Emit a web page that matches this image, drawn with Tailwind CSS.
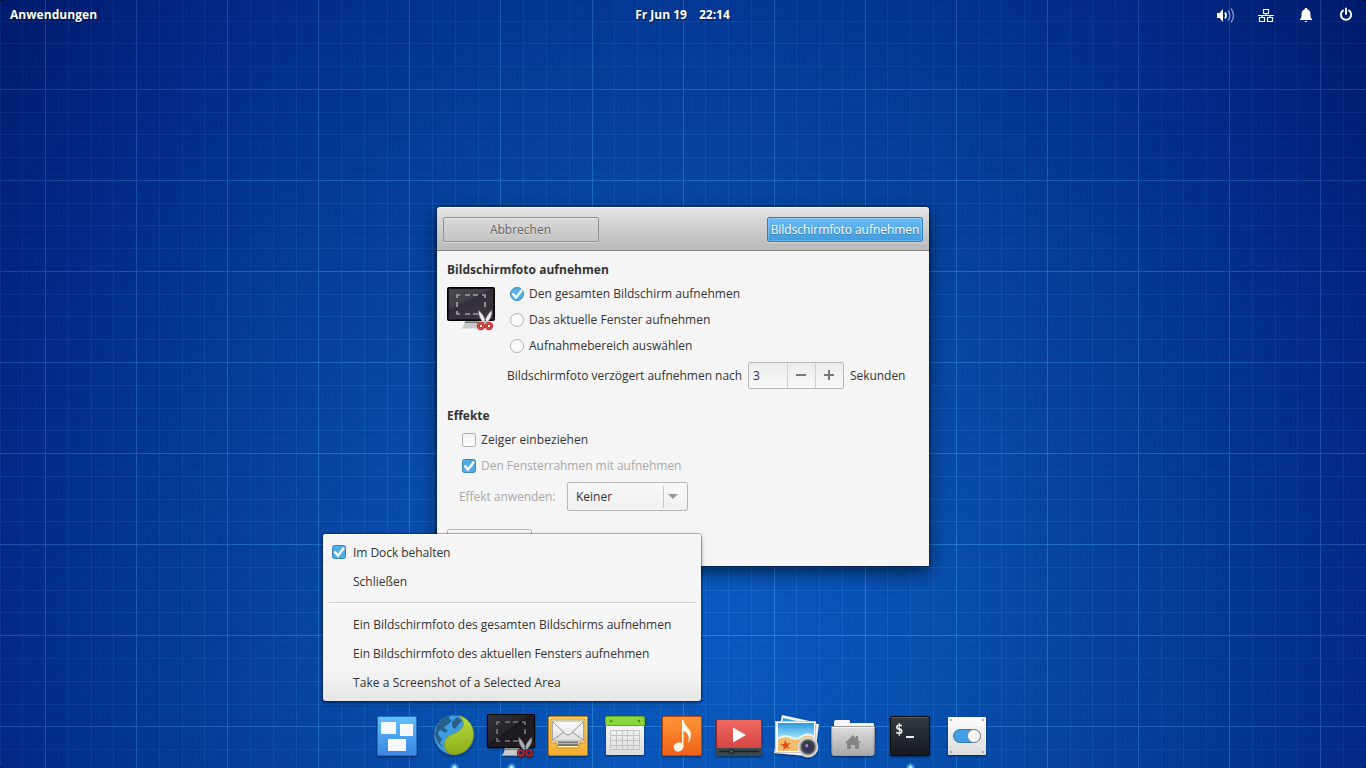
<!DOCTYPE html>
<html lang="de">
<head>
<meta charset="utf-8">
<title>Bildschirmfoto</title>
<script src="https://cdn.jsdelivr.net/npm/@tailwindcss/browser@4"></script>
</head>
<body class="relative h-[768px] w-[1366px] overflow-hidden bg-black text-[12px] leading-[18px] text-[#333] font-['Open_Sans','Noto_Sans',sans-serif]">

<!-- wallpaper -->
<svg class="absolute inset-0" width="1366" height="768" viewBox="0 0 1366 768">
  <defs>
    <radialGradient id="wall" gradientUnits="userSpaceOnUse" cx="0" cy="0" r="1" gradientTransform="translate(683 620) scale(890 1030)">
      <stop offset="0" stop-color="#0959c0"/><stop offset=".3" stop-color="#074dab"/><stop offset=".54" stop-color="#043c98"/><stop offset=".8" stop-color="#002782"/><stop offset="1" stop-color="#001768"/>
    </radialGradient>
    <radialGradient id="light" gradientUnits="userSpaceOnUse" cx="0" cy="0" r="1" gradientTransform="translate(683 560) scale(800 720)">
      <stop offset="0" stop-color="#4fb4ff" stop-opacity=".55"/><stop offset="1" stop-color="#4aa8f0" stop-opacity=".3"/>
    </radialGradient>
    <mask id="grid" maskUnits="userSpaceOnUse" x="0" y="0" width="1366" height="768"><path id="fine" stroke="#fff" stroke-opacity=".055"/><path id="minor" stroke="#fff" stroke-opacity=".33"/><path id="major" stroke="#fff" stroke-opacity=".85"/></mask>
  </defs>
  <rect width="1366" height="768" rx="3" fill="url(#wall)"/>
  <rect width="1366" height="768" fill="url(#light)" mask="url(#grid)"/>
</svg>
<script>
  // Blueprint grid: every 4th line is major, each cell is split into five fine steps.
  const cell = 1366 / 60, d = { fine: '', minor: '', major: '' };
  const add = (i, start, draw) => {
    const kind = i % 20 === 0 ? 'major' : i % 5 === 0 ? 'minor' : 'fine';
    d[kind] += draw(Math.floor(start + i * cell / 5) + 0.5);
  };
  for (let i = -10; i < 292; i++) add(i, 45.6, x => `M${x} 0V768`);
  for (let i = -20; i < 172; i++) add(i, 89.3, y => `M0 ${y}H1366`);
  for (const k in d) document.getElementById(k).setAttribute('d', d[k]);
</script>

<!-- panel -->
<header class="relative grid h-[30px] grid-cols-3 items-center pl-[10px] pr-[12px] font-bold text-white [text-shadow:0_1px_2px_rgba(0,0,0,.6)]">
  <span class="tracking-[0.06px]">Anwendungen</span>
  <div class="flex justify-center gap-3 pl-px"><span>Fr Jun 19</span><span>22:14</span></div>
  <div class="flex items-center justify-end gap-[24px]">
    <svg class="-mr-[2px]" width="20" height="16" viewBox="0 0 20 16" fill="none"><path d="M1 6h2.500l3.500-4v13l-3.500-4H1z" fill="#fff"/><path d="M9 5.500q2 3 0 6" stroke="#fff" stroke-width="1.800"/><path d="M12 3.500q3.500 5 0 10M15 1.500q5 7 0 14" stroke="#fff" stroke-opacity=".45" stroke-width="1.600"/></svg>
    <svg width="16" height="16" viewBox="0 0 16 16" fill="none" stroke="#fff" stroke-width="1.200"><path d="M5.500 2.500h5v4h-5zM1.500 10.500h5v4h-5zM9.500 10.500h5v4h-5zM0 8.500h16M8 6v2.500M4 8.500v2M12 8.500v2"/></svg>
    <svg width="16" height="16" viewBox="0 0 16 16" fill="#fff"><path d="M8 1c1 0 1.500.6 1.500 1.500C12 3.200 12.500 5.200 12.500 8c0 2.500.5 3.500 1.500 4v1H2v-1c1-.5 1.500-1.500 1.500-4 0-2.800.5-4.800 3-5.500C6.500 1.600 7 1 8 1zM6.500 14h3q-.2 1-1.500 1t-1.500-1z"/></svg>
    <svg width="16" height="16" viewBox="0 0 16 16" fill="none" stroke="#fff" stroke-width="1.900" stroke-linecap="round"><path d="M8 1.500V7M5 3.500A5.100 5.100 0 1 0 11 3.500"/></svg>
  </div>
</header>

<!-- screenshot dialog -->
<main class="absolute left-[437px] top-[207px] flex h-[359px] w-[492px] flex-col rounded-t-[4px] bg-[#f5f5f5] shadow-[0_0_1px_1px_rgba(0,0,0,.35),0_6px_18px_rgba(0,0,0,.6)]">
  <div class="flex h-[44px] items-center justify-between rounded-t-[4px] border-b border-[#7f7f7f] bg-linear-to-b from-[#e4e4e4] to-[#b9b9b9] px-[6px] pt-[2px] shadow-[inset_0_1px_0_#f8f8f8,inset_0_-1px_0_#c4c4c4]">
    <button class="h-[25px] w-[156px] rounded-[2px] border border-[#929292] bg-linear-to-b from-[#d9d9d9] to-[#c4c4c4] pr-px text-[#666] shadow-[inset_0_1px_0_rgba(255,255,255,.35),0_1px_0_rgba(255,255,255,.3)] [text-shadow:0_1px_0_rgba(255,255,255,.4)]">Abbrechen</button>
    <button class="h-[25px] w-[156px] whitespace-nowrap rounded-[2px] border border-[#2d82c4] bg-linear-to-b from-[#6cbcf3] to-[#419cde] text-white shadow-[inset_0_0_0_1px_rgba(255,255,255,.22),0_1px_0_rgba(255,255,255,.3)] [text-shadow:0_1px_1px_rgba(0,0,0,.3)]"><span class="-mx-2 tracking-[-0.04px]">Bildschirmfoto aufnehmen</span></button>
  </div>
  <div class="flex flex-col pl-[10px] pt-[10px]">
    <h2 class="font-bold tracking-[0.03px]">Bildschirmfoto aufnehmen</h2>
    <div class="mt-[2px] flex">
      <svg class="mt-[6px]" width="50" height="48" viewBox="0 0 50 48"><use href="#shot"/></svg>
      <div class="ml-[13px] flex flex-col pt-[2px]">
        <label class="flex h-[26px] items-center gap-[5px] pb-[4px]"><svg width="14" height="14" viewBox="0 0 14 14"><circle cx="7" cy="7" r="6.500" fill="#53b3ea" stroke="#3c86b5"/><path d="M2.500 6.500l3.500 4L12 3" fill="none" stroke="#fff" stroke-width="2.300"/></svg>Den gesamten Bildschirm aufnehmen</label>
        <label class="flex h-[26px] items-center gap-[5px] pb-[4px]"><span class="size-[14px] rounded-full border border-[#b3b3b3] bg-linear-to-b from-[#fafafa] to-white"></span>Das aktuelle Fenster aufnehmen</label>
        <label class="flex h-[26px] items-center gap-[5px] pb-[4px]"><span class="size-[14px] rounded-full border border-[#b3b3b3] bg-linear-to-b from-[#fafafa] to-white"></span>Aufnahmebereich auswählen</label>
      </div>
    </div>
    <div class="ml-[60px] mt-px flex h-[27px] items-center">
      <span class="w-[235px] whitespace-nowrap tracking-[-0.02px]">Bildschirmfoto verzögert aufnehmen nach</span>
      <div class="ml-[6px] flex h-[27px] w-[96px] rounded-[2px] border border-[#b8b8b8] bg-linear-to-b from-[#ececec] to-[#f8f8f8]">
        <span class="w-[38px] pl-[4px] leading-[25px]">3</span>
        <svg width="56" height="25" viewBox="0 0 56 25" fill="none"><path d="M.5 0V25M28.500 0V25" stroke="#cfcfcf"/><path d="M9 12h10M37 12h10M42 7v10" stroke="#777" stroke-width="2"/></svg>
      </div>
      <span class="ml-[6px] tracking-[-0.05px]">Sekunden</span>
    </div>
    <h2 class="mt-[18px] font-bold tracking-[-0.05px]">Effekte</h2>
    <label class="ml-[15px] mt-[6px] flex h-[18px] items-center gap-[5px]"><span class="size-[14px] rounded-[2px] border border-[#b0b0b0] bg-linear-to-b from-[#f2f2f2] to-white"></span><span class="tracking-[0.07px]">Zeiger einbeziehen</span></label>
    <label class="ml-[15px] mt-[8px] flex h-[18px] items-center gap-[5px] text-[#a8a8a8]"><svg width="14" height="14"><use href="#check"/></svg><span class="tracking-[-0.03px]">Den Fensterrahmen mit aufnehmen</span></label>
    <div class="ml-[12px] mt-[7px] flex h-[29px] items-center text-[#a8a8a8]">
      <span class="w-[108px] tracking-[-0.05px]">Effekt anwenden:</span>
      <div class="flex h-[29px] w-[121px] items-center justify-between rounded-[2px] border border-[#b8b8b8] bg-linear-to-b from-[#f8f8f8] to-[#f1f1f1] pl-[8px] text-[#333]"><span>Keiner</span><svg width="24" height="27" viewBox="0 0 24 27"><path d="M.5 3V25" stroke="#c8c8c8"/><path d="M5 11h10l-5 5z" fill="#999"/></svg></div>
    </div>
    <div class="mt-[18px] h-[27px] w-[85px] rounded-[2px] border border-[#b8b8b8]"></div>
  </div>
</main>

<!-- dock context menu -->
<nav class="absolute left-[323px] top-[534px] flex h-[167px] w-[378px] flex-col rounded-[3px] bg-linear-to-b from-[#f5f5f5] from-80% to-[#e6e6e6] pt-[4px] shadow-[0_0_0_1px_rgba(0,0,0,.25),0_2px_5px_rgba(0,0,0,.4),inset_0_1px_0_#fff]">
  <div class="flex h-[29px] items-center pl-[9px] tracking-[-0.05px]"><svg class="relative -top-px mr-[7px]" width="14" height="14"><use href="#check"/></svg>Im Dock behalten</div>
  <div class="flex h-[29px] items-center pl-[30px]">Schließen</div>
  <div class="mx-[6px] mb-[7px] mt-[6px] h-px bg-[#ccc] shadow-[0_1px_0_#fff]"></div>
  <div class="flex h-[29px] items-center pl-[30px] tracking-[-0.01px]">Ein Bildschirmfoto des gesamten Bildschirms aufnehmen</div>
  <div class="flex h-[29px] items-center pl-[30px] tracking-[-0.035px]">Ein Bildschirmfoto des aktuellen Fensters aufnehmen</div>
  <div class="flex h-[29px] items-center pl-[30px] tracking-[0.065px]">Take a Screenshot of a Selected Area</div>
</nav>

<!-- dock -->
<svg class="absolute left-[370px] top-[708px]" width="630" height="60" viewBox="370 708 630 60">
  <defs>
    <linearGradient id="gb" x2="0" y2="1"><stop stop-color="#62c0f8"/><stop offset="1" stop-color="#3a86e2"/></linearGradient>
    <linearGradient id="gsky" x2="0" y2="1"><stop stop-color="#2b9be0"/><stop offset=".5" stop-color="#9adcf5"/></linearGradient>
    <linearGradient id="gs" x2="1" y2="1"><stop stop-color="#34323a"/><stop offset=".45" stop-color="#27252a"/><stop offset=".46" stop-color="#1b191f"/><stop offset="1" stop-color="#272129"/></linearGradient>
    <linearGradient id="gs2" x2=".7" y2="1"><stop stop-color="#4a474f"/><stop offset=".45" stop-color="#423e47"/><stop offset=".48" stop-color="#332f38"/><stop offset="1" stop-color="#3c3440"/></linearGradient>
    <linearGradient id="gy" x2="0" y2="1"><stop stop-color="#fce48a"/><stop offset="1" stop-color="#f3aa2c"/></linearGradient>
    <linearGradient id="gw" x2="0" y2="1"><stop stop-color="#fdfdfd"/><stop offset="1" stop-color="#dcdcdc"/></linearGradient>
    <linearGradient id="gg" x2="0" y2="1"><stop stop-color="#dedede"/><stop offset="1" stop-color="#a9a9a9"/></linearGradient>
    <linearGradient id="go" x2="0" y2="1"><stop stop-color="#ff9638"/><stop offset="1" stop-color="#ee6018"/></linearGradient>
    <linearGradient id="gr" x2="0" y2="1"><stop stop-color="#ee6b62"/><stop offset="1" stop-color="#cf3b3a"/></linearGradient>
    <linearGradient id="gt" x2="0" y2="1"><stop stop-color="#343a42"/><stop offset="1" stop-color="#15191f"/></linearGradient>
    <linearGradient id="ggr" x2="0" y2="1"><stop stop-color="#b9de3c"/><stop offset="1" stop-color="#8dad1c"/></linearGradient>
    <radialGradient id="gd"><stop stop-color="#fff"/><stop offset=".3" stop-color="#8fd8ff" stop-opacity=".9"/><stop offset="1" stop-color="#38a8ff" stop-opacity="0"/></radialGradient>
    <filter id="sh" x="-20%" y="-20%" width="140%" height="150%"><feDropShadow dx="0" dy="1" stdDeviation="1" flood-opacity=".5"/></filter>
    <symbol id="check" viewBox="0 0 14 14"><rect x=".5" y=".5" width="13" height="13" rx="2" fill="#50ade8" stroke="#3a86b8"/><path d="M2.500 6.500l3.500 4L12 2.800" fill="none" stroke="#fff" stroke-width="2.400"/></symbol>
    <g id="stand"><path d="M18 34h14l1 6h2v1.500H14q3-1 4-7.500z" fill="#c9c9c9"/><path d="M18 34.500h14l.3 1.500H17.700z" fill="#777"/></g>
    <g id="blades"><path d="M31.500 23q-.5 8 5.500 13l1.800-2Q37 28 31.500 23zM45 23q.5 8-5.500 13l-1.800-2Q39.500 28 45 23z" fill="#ececec" stroke="#555" stroke-width=".5"/></g>
    <g id="shot"><use href="#stand"/><rect x=".5" y=".5" width="47" height="33" rx="1" fill="url(#gs2)" stroke="#000"/><rect x="1.500" y="1.500" width="45" height="31" fill="none" stroke="#18161a"/><path d="M10 11V8h3M18 8h5M26 8h5M35 8h3v3M10 15v5M38 15v5M10 24v3h3M18 27h5M26 27h5" fill="none" stroke="#a19ea5" stroke-width="1.700"/><use href="#blades"/><g fill="none" stroke="#8e2424" stroke-width="3"><circle cx="34" cy="39" r="2.700"/><circle cx="42" cy="39" r="2.700"/></g><g fill="none" stroke="#dc4a46" stroke-width="1.900"><circle cx="34" cy="39" r="2.700"/><circle cx="42" cy="39" r="2.700"/></g></g>
  </defs>

  <!-- workspaces -->
  <g filter="url(#sh)"><rect x="377.500" y="716.500" width="39" height="39" rx="1.500" fill="url(#gb)" stroke="#2870bd"/><g fill="#f5f9fc"><rect x="381" y="722" width="15" height="12" rx=".5"/><rect x="400" y="724" width="13" height="12" rx=".5"/><rect x="388" y="739" width="18" height="12" rx=".5"/></g></g>

  <!-- browser -->
  <g filter="url(#sh)"><circle cx="454" cy="735" r="20" fill="#3e9de0" stroke="#285e90"/><path d="M437 726q3-6 9-9l4-1-1 3 3 1-3 4-3 1-2 3 4 2-3 3-4-3-3 2 1 4 3 3-2 4 3 5q-7-6-8-14zM452 722l5-5 5 4-3 3-4 5-3-2z" fill="#28608c"/><path d="M459 715.500c10 3 15 11 14.500 20-1 11-9 19-20 19-7 0-10-7-9-12 2-10 17-8 19-18q0-5-4.500-9z" fill="url(#ggr)" stroke="#7b971d" stroke-width=".7"/></g>

  <!-- screenshot -->
  <g transform="translate(487 714)" filter="url(#sh)"><use href="#stand"/><rect x=".5" y=".5" width="47" height="33" rx="1" fill="url(#gs)" stroke="#000"/><path d="M10 11V8h3M18 8h5M26 8h5M35 8h3v3M10 15v5M38 15v5M10 24v3h3M18 27h5M26 27h5" fill="none" stroke="#77757a" stroke-width="1.700"/><g opacity=".7"><use href="#blades"/></g><g fill="none" stroke="#54161a" stroke-width="3"><circle cx="34" cy="39" r="2.700"/><circle cx="42" cy="39" r="2.700"/></g><g fill="none" stroke="#b02c30" stroke-width="1.600"><circle cx="34" cy="39" r="2.700"/><circle cx="42" cy="39" r="2.700"/></g></g>

  <!-- mail -->
  <g filter="url(#sh)"><rect x="548.500" y="716.500" width="39" height="39" rx="1.500" fill="url(#gy)" stroke="#c27a12"/><path d="M551 719h34v24h-6v5h-22v-5h-6z" fill="#fff0b0" stroke="#d28a18"/><rect x="558" y="737" width="20" height="9" fill="#777"/><path d="M558 741h20M558 743.500h20" stroke="#bbb"/><rect x="552.500" y="721" width="31" height="20" fill="url(#gw)" stroke="#a8a8a8"/><path d="M553 722l12.500 12q2.500 2 5 0L583 722M553 740l11-8M583 740l-11-8" fill="none" stroke="#999"/></g>

  <!-- calendar -->
  <g filter="url(#sh)"><rect x="606" y="717" width="38" height="38" rx="1.500" fill="url(#gw)"/><path d="M605.500 725.500v-7.500q0-1.500 1.500-1.500h36q1.500 0 1.500 1.500v7.500z" fill="#8ad63e" stroke="#62ad22"/><g fill="#4c8f18"><circle cx="611" cy="721" r="1.200"/><circle cx="639" cy="721" r="1.200"/></g><path d="M610.500 730.500h29v19h-29zM610.500 735.500h29M610.500 740.500h29M610.500 745.500h29M616.500 730v20M622.500 730v20M627.500 730v20M633.500 730v20" fill="none" stroke="#c2c2c2"/></g>

  <!-- music -->
  <g filter="url(#sh)"><rect x="662.500" y="716.500" width="39" height="39" rx="1.500" fill="url(#go)" stroke="#bd4710"/><ellipse cx="678.500" cy="747" rx="5" ry="4.500" transform="rotate(-25 678.500 747)" fill="#fff8e6"/><path d="M682 747V720h1.500c1 7 8 8 7.500 16q-.3 4-3 7c2-7 0-10-4.500-12v16z" fill="#fff8e6"/></g>

  <!-- videos -->
  <g filter="url(#sh)"><rect x="716.500" y="719.500" width="45" height="36" rx="1.500" fill="url(#gr)" stroke="#9c2a28"/><path d="M716 748h46v6q0 2-2 2h-42q-2 0-2-2z" fill="#3a474b"/><path d="M719 751.500h40" stroke="#182225" stroke-width="1.500"/><circle cx="731.500" cy="751.500" r="2.200" fill="#465357" stroke="#111b1e"/><path d="M733 727.500l13 7.500-13 7.500z" fill="#fff"/></g>

  <!-- photos -->
  <g filter="url(#sh)"><path d="M782 715l32 7-7 34-33-3z" fill="#f1f1f1"/><path d="M783 718l28 6-1 4-28-4z" fill="#38a6dc"/><path d="M788 722l31 2-4 30-36-2z" fill="#f0f0f0"/><path d="M785 723l31 4" stroke="#2c8fbb" stroke-width="2"/><rect x="775.500" y="721.500" width="40" height="31" fill="#fafafa" stroke="#ccc"/><rect x="778" y="723" width="36" height="28" fill="url(#gsky)"/><path d="M778 739q7-4 13-1t11-1 12 0v14h-36z" fill="#efbd6c"/><path d="M778 738.500q7-4 13-1t11-1 12 0" fill="none" stroke="#e9f7f4" stroke-width="2"/><path d="M785 740l1.700 3.400 4-.4-3 2.700 2 3.400-3.500-1.600-2.800 2.800.3-3.800-3.500-2 3.800-.6z" fill="#e3491f"/><circle cx="808" cy="747" r="9.500" fill="#aaa" stroke="#ddd" stroke-width="1.600"/><circle cx="808" cy="747" r="7" fill="#3c4048" stroke="#666"/><circle cx="808" cy="747" r="4" fill="#37305a"/><circle cx="806.800" cy="745.700" r="1.600" fill="#8b96b8"/></g>

  <!-- home folder -->
  <g filter="url(#sh)"><path d="M834 730v-8q0-2 2-2h13q1 0 1 2v1h23q1 0 1 2v5z" fill="#f5f5f5"/><path d="M831.500 726.500h43l-.5 27q0 2-2 2h-38q-2 0-2-2z" fill="url(#gg)" stroke="#9a9a9a"/><path d="M832 727.500h42" stroke="#f3f3f3"/><path d="M845 743l8-8 3 3v-2h2v4l3 3h-2v6h-4v-4h-4v4h-4v-6z" fill="#858585"/></g>

  <!-- terminal -->
  <g filter="url(#sh)"><rect x="890.500" y="716.500" width="39" height="39" rx="1.500" fill="url(#gt)" stroke="#090b0e"/><path d="M892 717.500h36" stroke="#5a6068"/><text x="895" y="733.500" font-family="DejaVu Sans Mono" font-size="14" font-weight="700" fill="#eee">$</text><path d="M906 737h8" stroke="#eee" stroke-width="2"/></g>

  <!-- settings -->
  <g filter="url(#sh)"><rect x="948" y="717" width="38" height="38" rx="1" fill="url(#gw)"/><g fill="#999"><circle cx="951" cy="720" r="1"/><circle cx="983" cy="720" r="1"/><circle cx="951" cy="752" r="1"/><circle cx="983" cy="752" r="1"/></g><rect x="953.500" y="729.500" width="27" height="13" rx="6.500" fill="#419fe6" stroke="#337bb4"/><circle cx="974" cy="736" r="6.500" fill="#f5f5f5" stroke="#888"/></g>

  <g fill="url(#gd)"><circle cx="454.500" cy="767.500" r="5"/><circle cx="511.500" cy="767.500" r="5"/><circle cx="910.500" cy="767.500" r="5"/></g>
</svg>
</body>
</html>
